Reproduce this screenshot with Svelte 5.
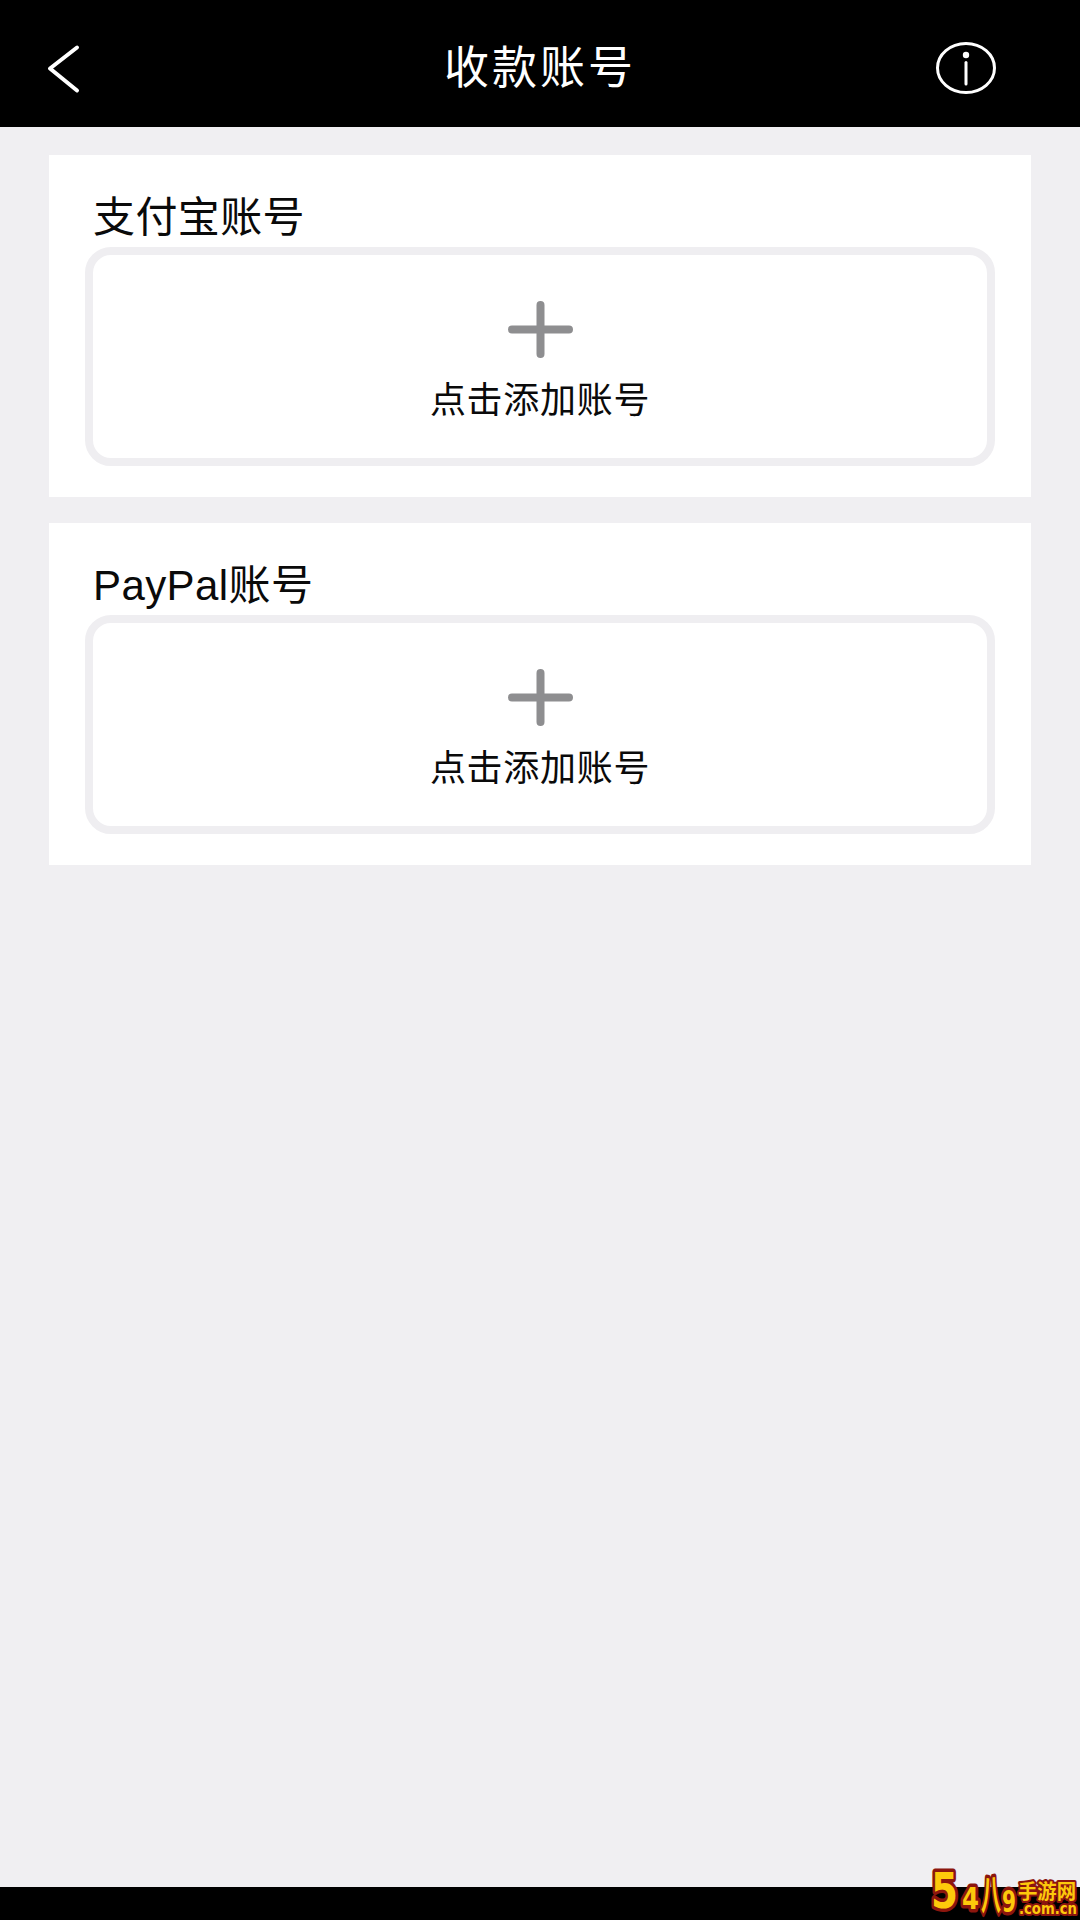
<script>
  const sections = ['支付宝账号', 'PayPal账号'];
</script>

<div class="page">
  <header class="topbar">
    <svg class="back" width="40" height="56" viewBox="0 0 40 56" aria-label="返回">
      <path d="M32 6.5 L5 27.5 L32 49.5" />
    </svg>
    <h1>收款账号</h1>
    <svg class="info" width="62" height="54" viewBox="0 0 62 54" aria-label="说明">
      <ellipse cx="31" cy="27" rx="28.5" ry="24.5" />
      <circle cx="31" cy="14" r="3.2" />
      <path d="M31 21.5 V43" />
    </svg>
  </header>

  <main class="content">
    {#each sections as title}
      <section class="card">
        <div class="label">{title}</div>
        <button class="add" type="button">
          <svg width="65" height="57" viewBox="0 0 65 57">
            <path d="M4 28.5 H61 M32.5 4 V53" />
          </svg>
          <span>点击添加账号</span>
        </button>
      </section>
    {/each}
  </main>

  <footer class="bottombar"></footer>

  <svg class="mark" width="155" height="60" viewBox="0 0 155 60">
    <g class="big">
      <text x="6" y="48" textLength="27" lengthAdjust="spacingAndGlyphs" font-size="50">5</text>
      <text x="37" y="49" textLength="17" lengthAdjust="spacingAndGlyphs" font-size="31">4</text>
      <text x="56" y="50" textLength="20" lengthAdjust="spacingAndGlyphs" font-size="42">八</text>
      <text x="77" y="52" textLength="14" lengthAdjust="spacingAndGlyphs" font-size="31">9</text>
    </g>
    <g class="small">
      <text x="93" y="39" textLength="58" lengthAdjust="spacingAndGlyphs" font-size="20">手游网</text>
      <text x="94" y="54" textLength="58" lengthAdjust="spacingAndGlyphs" font-size="15">.com.cn</text>
    </g>
  </svg>
</div>

<style>
  :global(body) {
    margin: 0;
    background: #f0eff2;
  }

  .page {
    position: relative;
    display: flex;
    flex-direction: column;
    height: 1920px;
    background: #f0eff2;
    font-family: "Liberation Sans", "Noto Sans CJK SC", sans-serif;
    overflow: hidden;
  }

  .topbar {
    display: grid;
    grid-template-columns: 1fr auto 1fr;
    align-items: center;
    height: 127px;
    padding: 0 83px;
    background: #000;
    color: #fff;
    flex: none;
    box-sizing: border-box;
  }

  .topbar h1 {
    margin: 11px 0 0;
    font-size: 45px;
    font-weight: 400;
    line-height: 60px;
    letter-spacing: 3px;
    white-space: nowrap;
  }

  .back path,
  .info ellipse,
  .info path {
    fill: none;
    stroke: #fff;
    stroke-linecap: round;
    stroke-linejoin: round;
  }

  .back {
    margin: 10px 0 0 -38px;
  }

  .back path {
    stroke-width: 4px;
  }

  .info {
    justify-self: end;
    margin-top: 9px;
  }

  .info ellipse,
  .info path {
    stroke-width: 3px;
  }

  .info circle {
    fill: #fff;
  }

  .content {
    flex: 1;
    display: flex;
    flex-direction: column;
    gap: 26px;
    padding: 28px 49px 0;
  }

  .card {
    height: 342px;
    padding: 37px 36px 0;
    box-sizing: border-box;
    background: #fff;
  }

  .label {
    height: 52px;
    padding-left: 8px;
    margin-bottom: 3px;
    color: #0a0a0a;
    font-size: 42px;
    line-height: 52px;
    letter-spacing: 0.4px;
  }

  .add {
    display: flex;
    flex-direction: column;
    align-items: center;
    width: 100%;
    height: 219px;
    padding: 46px 0 0;
    box-sizing: border-box;
    background: #fff;
    border: 8px solid #efeef1;
    border-radius: 26px;
    font-family: inherit;
    color: #0a0a0a;
  }

  .add svg path {
    fill: none;
    stroke: #8e8e90;
    stroke-width: 8px;
    stroke-linecap: round;
  }

  .add span {
    margin-top: 18px;
    font-size: 36px;
    line-height: 50px;
    letter-spacing: 0.7px;
  }

  .bottombar {
    flex: none;
    height: 33px;
    background: #000;
  }

  .mark {
    position: absolute;
    right: 0;
    bottom: 0;
  }

  .mark text {
    paint-order: stroke;
    stroke: #8c160e;
    stroke-linejoin: round;
    fill: #fdc90b;
    font-family: "DejaVu Sans", "Noto Sans CJK SC", sans-serif;
    font-weight: 700;
  }

  .big text {
    stroke-width: 7px;
  }

  .small text {
    stroke-width: 4px;
  }
</style>
